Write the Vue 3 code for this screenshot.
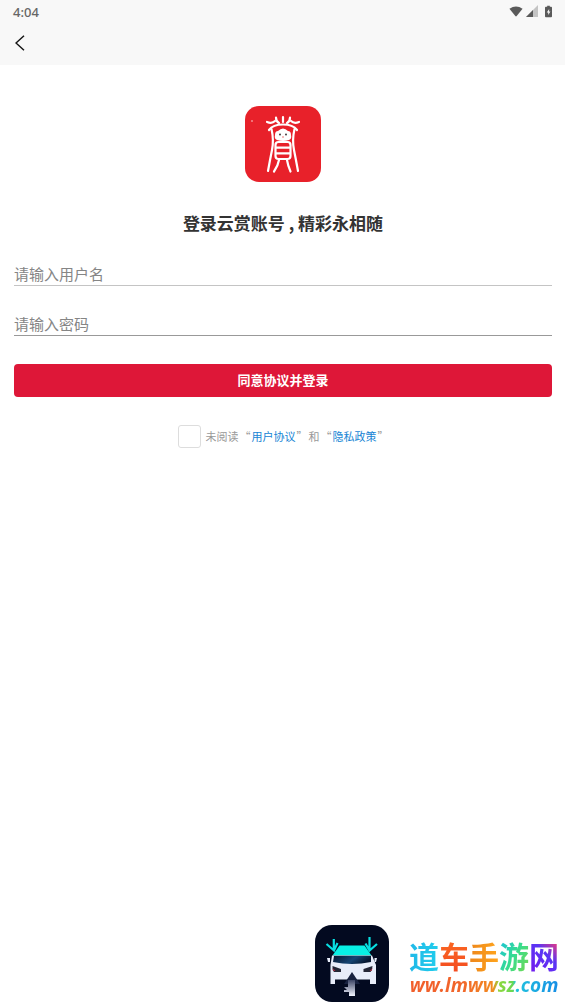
<script setup>
import { ref } from 'vue'

const username = ref('')
const password = ref('')
const agreed = ref(false)
</script>

<template>
  <div class="page">
    <header class="top">
      <div class="status">
        <span>4:04</span>
        <div class="status-icons">
          <svg class="wifi" viewBox="0 0 16 12" aria-hidden="true">
            <path d="M0.5 2.8Q8-2.2 15.5 2.8L8.8 11.2Q8 12 7.2 11.2Z" fill="#5a5a5a" />
          </svg>
          <svg class="signal" viewBox="0 0 12 12" aria-hidden="true">
            <path d="M12 0V12H0Z" fill="#c4c4c4" />
            <path d="M7 5V12H0Z" fill="#5a5a5a" />
          </svg>
          <svg class="battery" viewBox="0 0 8 13" aria-hidden="true">
            <path d="M2.5 0h3v1.2H7q1 0 1 1V12q0 1-1 1H1q-1 0-1-1V2.2q0-1 1-1h1.5Z" fill="#5a5a5a" />
            <path d="M4.8 3.5L2 7.6h1.7v3L6.2 6.4H4.6Z" fill="#f8f8f8" />
          </svg>
        </div>
      </div>
      <button class="back" type="button" aria-label="返回">
        <svg viewBox="0 0 10 16" aria-hidden="true">
          <path d="M9 0.8L1 8l8 7.2" fill="none" stroke="#151515" stroke-width="1.5" />
        </svg>
      </button>
    </header>

    <main class="content">
      <svg class="logo" viewBox="0 0 76 76" aria-hidden="true">
        <rect width="76" height="76" rx="14" fill="#e8212a" />
        <circle cx="7" cy="15" r="0.7" fill="#fff" />
        <g fill="none" stroke="#fff" stroke-width="2.2" stroke-linecap="round" stroke-linejoin="round">
          <path d="M38 11v5M31 11.500q0 4 3 5.500M45 11.500q0 4-3 5.500" />
          <path d="M22 16q5 2 8-1M54 16q-5 2-8-1" />
          <path d="M24 24q4-5.500 14-5.500T52 24" />
          <path d="M26.500 23q2.500 11 0.500 21T23 65M49.500 23q-2.500 11-0.500 21T53 65" />
          <rect x="30.500" y="36" width="15" height="17" rx="3" />
          <path d="M31 41.600h14M31 47.300h14M34 54q-1 6-5 11.500M42 54q1 6 3.500 11.500" />
        </g>
        <path d="M32 34q-3-1-2-5 0-4 3-4 5-5 10 0 3 0 3 4 1 4-2 5-6 2-12 0Z" fill="#fff" />
        <g fill="#33262b">
          <circle cx="35" cy="28.500" r="0.9" />
          <circle cx="41" cy="28.500" r="0.9" />
          <rect x="37" y="30.500" width="2" height="1" fill="#e77" />
        </g>
      </svg>

      <h1>登录云赏账号 , 精彩永相随</h1>

      <form class="form" @submit.prevent>
        <input v-model="username" class="field" type="text" placeholder="请输入用户名" aria-label="用户名" />
        <input v-model="password" class="field darker" type="password" placeholder="请输入密码" aria-label="密码" />
        <button class="submit" type="submit">同意协议并登录</button>
        <div class="agreement">
          <input id="agree" v-model="agreed" type="checkbox" />
          <label for="agree">未阅读</label>
          <span>“</span><a href="#">用户协议</a><span>”</span>
          <span>和</span>
          <span>“</span><a href="#">隐私政策</a><span>”</span>
        </div>
      </form>
    </main>

    <footer class="brand">
      <svg class="brand-logo" viewBox="0 0 74 77" aria-hidden="true">
        <defs>
          <linearGradient id="glass" x2="1" y2="0.3">
            <stop offset="0" stop-color="#06152f" />
            <stop offset="0.6" stop-color="#164574" />
            <stop offset="1" stop-color="#071832" />
          </linearGradient>
          <linearGradient id="road" x2="0" y2="1">
            <stop offset="0" stop-color="#3c4565" />
            <stop offset="1" stop-color="#f2f5ff" />
          </linearGradient>
        </defs>
        <rect width="74" height="77" rx="17" fill="#030a20" />
        <path d="M24.5 20.5h25l7 10h-39Z" fill="#08f0e5" />
        <g fill="none" stroke="#08dfe2" stroke-width="2.2">
          <path d="M18.8 14v10M11.500 19l7.500 6.500L22.500 18" />
          <path d="M54.500 12v12M50.500 18.500l4 7L62 19" />
        </g>
        <path d="M17 30.500h40l4 9.500v19h-6v-4.500H20V59h-4.500V40Z" fill="#e8edfa" />
        <path d="M19 31h37v6q-19 4-38 0Z" fill="url(#glass)" />
        <path d="M12 33h3v4h-2ZM59.500 33H62l-1 4h-1.500Z" fill="#e8edfa" />
        <path d="M17.500 41l8.500 3v3h-7q-2-2-1.500-6ZM57.500 41l-9 3v3h7q2-2 2-6Z" fill="#252737" />
        <path d="M17.500 43l3 3h-2ZM57.500 43l-3 3h2Z" fill="#a72d42" />
        <path d="M37 47l8 12H29Z" fill="#17213f" />
        <path d="M33 55h7v16h-6v-4h-5v-2h3l-3-3h4Z" fill="url(#road)" />
      </svg>
      <div class="brand-text">
        <div class="brand-name">
          <span class="cyan">道</span><span class="red">车</span><span class="orange">手</span><span class="green">游</span><span class="violet">网</span>
        </div>
        <div class="brand-url">ww.lmwwsz.com</div>
      </div>
    </footer>
  </div>
</template>

<style>
body {
  background: #fff;
}
</style>

<style scoped>
.page {
  display: flex;
  flex-direction: column;
  box-sizing: border-box;
  min-height: 100vh;
  color: #333;
  font-family: "Noto Sans CJK SC", sans-serif;
}
.top {
  height: 65px;
  background: #f8f8f8;
}
.status {
  display: flex;
  align-items: center;
  justify-content: space-between;
  height: 24px;
  padding: 0 13px;
  color: #666;
  font: 500 13px/24px "Noto Sans", sans-serif;
}
.status-icons {
  display: flex;
  align-items: center;
  gap: 3px;
  height: 22px;
  margin-bottom: 2px;
}
.wifi {
  width: 14px;
  height: 11px;
}
.signal {
  width: 12px;
  height: 12px;
}
.battery {
  width: 7px;
  height: 13px;
  margin-left: 4px;
}
.back {
  display: flex;
  align-items: center;
  height: 38px;
  padding: 0 15px;
  border: 0;
  background: none;
}
.back svg {
  width: 10px;
  height: 16px;
}
.content {
  display: flex;
  flex-direction: column;
  align-items: center;
  padding: 41px 13px 0 14px;
}
.logo {
  width: 76px;
  height: 76px;
}
h1 {
  margin: 28px 0 0;
  font-size: 17px;
  font-weight: 700;
  line-height: 26px;
}
.form {
  display: flex;
  flex-direction: column;
  width: 100%;
  margin-top: 25px;
}
.field {
  box-sizing: border-box;
  width: 100%;
  height: 25px;
  margin-bottom: 25px;
  padding: 0;
  border: 0;
  border-bottom: 1px solid #c4c4c4;
  border-radius: 0;
  outline: none;
  background: none;
  color: #333;
  font: 15px/24px "Noto Sans CJK SC", sans-serif;
}
.darker {
  border-color: #999;
}
.field::placeholder {
  color: #858585;
  opacity: 1;
}
.submit {
  height: 33px;
  margin-top: 3px;
  padding: 0 0 2px;
  border: 0;
  border-radius: 4px;
  background: #de1738;
  color: #fff;
  font: 700 13px/31px "Noto Sans CJK SC", sans-serif;
}
.agreement {
  display: flex;
  align-items: center;
  justify-content: center;
  gap: 1px;
  margin-top: 28px;
  color: #999;
  font-size: 11px;
  line-height: 23px;
}
.agreement input {
  box-sizing: border-box;
  width: 23px;
  height: 23px;
  margin: 0 4px 0 0;
  border: 1px solid #ddd;
  border-radius: 3px;
  appearance: none;
  background: #fff;
}
.agreement input:checked {
  background: #de1738;
}
.agreement a {
  color: #1684d4;
  text-decoration: none;
}
.brand {
  display: flex;
  gap: 20px;
  justify-content: flex-end;
  margin-top: auto;
  padding: 0 6px 2px 0;
}
.brand-logo {
  width: 74px;
  height: 77px;
}
.brand-text {
  padding-top: 12px;
}
.brand-name {
  display: flex;
  font-size: 30px;
  font-weight: 700;
  line-height: 36px;
}
.brand-name span,
.brand-url {
  background-clip: text;
  color: transparent;
}
.cyan {
  background-image: linear-gradient(90deg, #20b8e8, #21cdec);
}
.red {
  background-image: linear-gradient(#fb6a22, #f34b20);
}
.orange {
  background-image: linear-gradient(90deg, #ed861b, #ffa51d);
}
.green {
  background-image: linear-gradient(120deg, #18bfe1, #35dc91, #77d94b);
}
.violet {
  background-image: linear-gradient(45deg, #7021ef 15%, #5935f5 55%, #f13878 90%);
}
.brand-url {
  background-image: linear-gradient(90deg, #f15e2b 0%, #f1652a 35%, #f28b20 56%, #8ed83e 60%, #69d852 69%, #20c3de 71%, #168de5 100%);
  font: italic 700 19px/24px "Open Sans", sans-serif;
  text-align: center;
}
</style>
